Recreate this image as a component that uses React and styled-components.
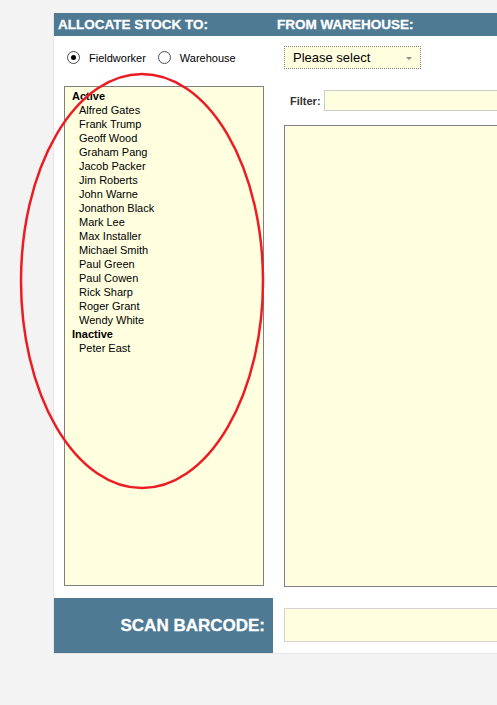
import React, { useState } from 'react';
import styled, { createGlobalStyle } from 'styled-components';

const GlobalStyle = createGlobalStyle`
  html, body {
    margin: 0;
    padding: 0;
    background: #f3f3f3;
    overflow: hidden;
  }
  body {
    font-family: 'Liberation Sans', Arial, sans-serif;
    color: #000;
  }
`;

const Page = styled.div`
  position: relative;
  height: 705px;
  padding: 13px 0 0 53px;
  box-sizing: border-box;
`;

const Panel = styled.div`
  width: 560px;
  background: #fff;
  border-left: 1px solid #e6e6e6;
  border-bottom: 1px solid #e6e6e6;
  display: grid;
  grid-template-columns: 219px 1fr;
`;

const HeaderCell = styled.div`
  height: 23px;
  background: #4e7a94;
  color: #fff;
  font-size: 13.5px;
  font-weight: bold;
  line-height: 23px;
  padding-left: ${(p) => p.$indent}px;
  white-space: nowrap;
  -webkit-text-stroke: 0.3px #fff;
`;

const LeftCol = styled.div`
  padding: 15px 0 0 10px;
`;

const RadioRow = styled.div`
  display: flex;
  align-items: center;
  height: 13px;
  margin-left: 3px;
  font-size: 11px;
`;

const RadioLabel = styled.label`
  display: flex;
  align-items: center;
  margin-right: 12px;
  cursor: pointer;
`;

const RadioDot = styled.span`
  width: 11px;
  height: 11px;
  border: 1px solid #4a4a4a;
  border-radius: 50%;
  background: #fff;
  margin-right: 9px;
  display: grid;
  place-items: center;
  &::after {
    content: '';
    width: 5px;
    height: 5px;
    border-radius: 50%;
    background: ${(p) => (p.$on ? '#000' : 'transparent')};
  }
`;

const ListBox = styled.div`
  margin-top: 22px;
  width: 191px;
  height: 496px;
  border: 1px solid #808080;
  background: #ffffe0;
  padding: 2px 0 0 7px;
  font-size: 11px;
  line-height: 14px;
`;

const GroupLabel = styled.div`
  font-weight: bold;
`;

const Person = styled.div`
  padding-left: 7px;
  cursor: default;
`;

const RightCol = styled.div`
  padding: 10px 0 0 11px;
`;

const SelectBox = styled.div`
  position: relative;
  width: 127px;
  height: 21px;
  border: 1px dotted #808080;
  background: #ffffe0;
  font-size: 13px;
  line-height: 21px;
  padding-left: 8px;
  &::after {
    content: '';
    position: absolute;
    right: 8px;
    top: 10px;
    border-left: 3px solid transparent;
    border-right: 3px solid transparent;
    border-top: 3px solid #8a8a8a;
  }
`;

const FilterRow = styled.div`
  display: flex;
  align-items: center;
  margin-top: 21px;
  padding-left: 6px;
  font-size: 11px;
  font-weight: bold;
  color: #333;
`;

const FilterInput = styled.div`
  margin-left: 3px;
  flex: 1;
  height: 19px;
  border: 1px solid #cccccc;
  background: #ffffe0;
`;

const ItemsBox = styled.div`
  margin-top: 14px;
  height: 460px;
  border: 1px solid #808080;
  background: #ffffe0;
`;

const ScanBar = styled.div`
  margin-top: 11px;
  height: 55px;
  background: #4e7a94;
  color: #fff;
  font-size: 17px;
  font-weight: bold;
  display: flex;
  align-items: center;
  justify-content: flex-end;
  padding-right: 8px;
  padding-top: 1px;
  box-sizing: border-box;
  -webkit-text-stroke: 0.3px #fff;
`;

const ScanCell = styled.div`
  margin-top: 11px;
  padding: 10px 0 0 11px;
`;

const ScanInput = styled.div`
  height: 32px;
  border: 1px solid #d3d3d3;
  background: #ffffe0;
`;

const Annotation = styled.svg`
  position: absolute;
  left: 0;
  top: 0;
  pointer-events: none;
`;

const active = [
  'Alfred Gates', 'Frank Trump', 'Geoff Wood', 'Graham Pang', 'Jacob Packer',
  'Jim Roberts', 'John Warne', 'Jonathon Black', 'Mark Lee', 'Max Installer',
  'Michael Smith', 'Paul Green', 'Paul Cowen', 'Rick Sharp', 'Roger Grant',
  'Wendy White',
];
const inactive = ['Peter East'];

export default function App() {
  const [target, setTarget] = useState('fieldworker');

  return (
    <Page>
      <GlobalStyle />
      <Panel>
        <HeaderCell $indent={4}>ALLOCATE STOCK TO:</HeaderCell>
        <HeaderCell $indent={4}>FROM WAREHOUSE:</HeaderCell>

        <LeftCol>
          <RadioRow>
            <RadioLabel onClick={() => setTarget('fieldworker')}>
              <RadioDot $on={target === 'fieldworker'} />
              Fieldworker
            </RadioLabel>
            <RadioLabel onClick={() => setTarget('warehouse')}>
              <RadioDot $on={target === 'warehouse'} />
              Warehouse
            </RadioLabel>
          </RadioRow>
          <ListBox>
            <GroupLabel>Active</GroupLabel>
            {active.map((n) => <Person key={n}>{n}</Person>)}
            <GroupLabel>Inactive</GroupLabel>
            {inactive.map((n) => <Person key={n}>{n}</Person>)}
          </ListBox>
        </LeftCol>

        <RightCol>
          <SelectBox>Please select</SelectBox>
          <FilterRow>
            Filter:
            <FilterInput />
          </FilterRow>
          <ItemsBox />
        </RightCol>

        <ScanBar>SCAN BARCODE:</ScanBar>
        <ScanCell>
          <ScanInput />
        </ScanCell>
      </Panel>

      <Annotation width="497" height="705">
        <ellipse cx="142" cy="281" rx="121" ry="207" fill="none" stroke="#ed1c24" strokeWidth="2.5" />
      </Annotation>
    </Page>
  );
}
